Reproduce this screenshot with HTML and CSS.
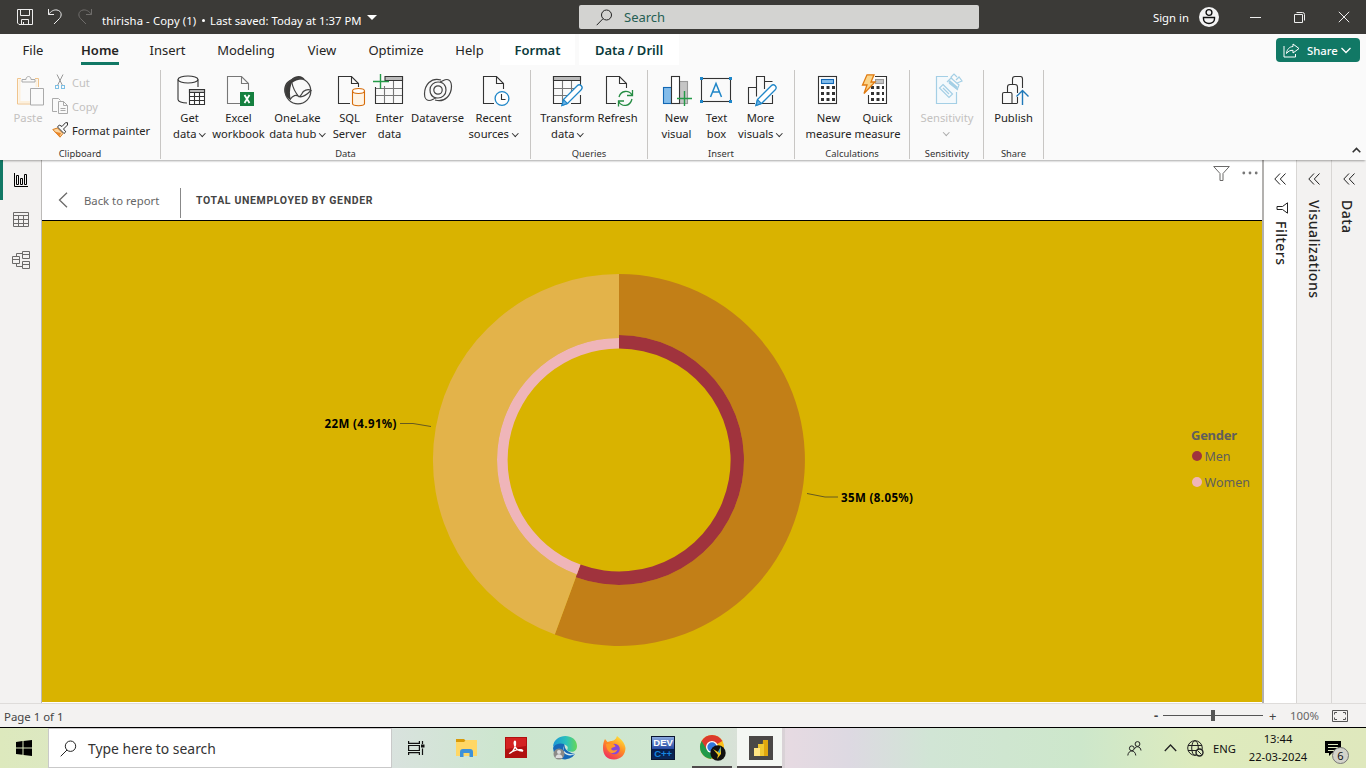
FILE: index.html
```
<!DOCTYPE html>
<html lang="en">
<head>
<meta charset="utf-8">
<title>thirisha - Copy (1)</title>
<link rel="stylesheet" href="styles.css">
</head>
<body>
<div class="app">
<header class="titlebar">
  <div class="quick">
    <svg width="16" height="16" viewBox="0 0 16 16" class="ln light"><path d="M.5.5h15v15H2L.5 14zM3.500.5v6h9v-6M4.500 15.500v-5h7v5M6.500 13v2.500"/></svg>
    <svg width="16" height="17" viewBox="0 0 16 17" class="ln light undo"><path d="M1.500 1v5.500H7M1.500 6.500C4 3 7 1.500 10 2c5 1 5 6 2.500 8.500L7 16"/></svg>
    <svg width="16" height="17" viewBox="0 0 16 17" class="ln dim redo"><path d="M14.500 1v5.500H9M14.500 6.500C12 3 9 1.500 6 2c-5 1-5 6-2.500 8.500L9 16"/></svg>
  </div>
  <div class="doc"><span class="doc-name">thirisha - Copy (1)</span><i class="dot"></i><span class="doc-saved">Last saved: Today at 1:37 PM</span><i class="caret"></i></div>
  <div class="search"><svg width="17" height="17" viewBox="0 0 17 17" class="ln"><circle cx="10.500" cy="6" r="5"/><path d="M7 9.700L.7 16.200"/></svg><span>Search</span></div>
  <div class="account"><span>Sign in</span>
    <svg width="20" height="20" viewBox="0 0 20 20"><circle cx="10" cy="10" r="10" fill="#f3f3f3"/><g fill="none" stroke="#111" stroke-width="1.400"><circle cx="10" cy="5.500" r="2.900"/><path d="M4.500 10.500h11v1.500a5.500 4.500 0 0 1-11 0z"/></g></svg>
  </div>
  <svg class="ln light win-min" width="11" height="12" viewBox="0 0 11 12"><path d="M0 6.500h11"/></svg>
  <svg class="ln light win-max" width="11" height="11" viewBox="0 0 11 11"><path d="M.5 2.500h8v8h-8zM2.500.5h6q2 0 2 2v6"/></svg>
  <svg class="ln light win-close" width="12" height="12" viewBox="0 0 12 12"><path d="M.8.8l10.400 10.400M11.200.8L.8 11.200"/></svg>
</header>

<nav class="tabs">
  <span class="tab t-file">File</span><span class="tab t-home on">Home</span><span class="tab t-insert">Insert</span><span class="tab t-model">Modeling</span><span class="tab t-view">View</span><span class="tab t-opt">Optimize</span><span class="tab t-help">Help</span><span class="tab ctx t-format">Format</span><span class="tab ctx t-drill">Data / Drill</span>
  <div class="share"><svg width="17" height="15" viewBox="0 0 17 15" class="ln"><path d="M1 3v11h11.500v-3M10 1l6 4.500L10 10V7.300C7 7.300 5.500 8 3.500 10.500 4 6 6.500 3.800 10 3.500z"/></svg><span>Share</span><svg width="10" height="7" viewBox="0 0 10 7" class="ln"><path d="M.5 1L5 5.500 9.500 1" stroke-width="1.300"/></svg></div>
</nav>

<section class="ribbon">
  <div class="group g-clip">
    <div class="clip">
      <div class="paste"><svg width="32" height="32" viewBox="0 0 32 32" fill="none" stroke="#aaa"><path d="M5 3.500H1.500V29H15M19 3.500h3.500V12" stroke="#f0c48c"/><path d="M5 5.500H3.500V27H15M19 5.500h1.500V12" stroke="#fdf0dc" stroke-width="2"/><path d="M6 7V4.500h4C10 .5 15 .5 15 4.500h4V7zM14.500 13.500h13v16.500h-13z" fill="#fafafa"/></svg><span>Paste</span></div>
      <div class="clip-list">
        <div class="mini off"><svg width="16" height="16" viewBox="0 0 16 16" fill="none" stroke="#999"><path d="M5 .5l5.500 11M11 .5l-5.500 11"/><g stroke="#7fc0e4"><rect x="3.500" y="11.500" width="3" height="3"/><rect x="9.500" y="11.500" width="3" height="3"/></g></svg><span>Cut</span></div>
        <div class="mini off"><svg width="16" height="16" viewBox="0 0 16 16" fill="none" stroke="#aaa"><path d="M5 13.500H.5V.5h6l2 2M6.500 3.500h5l4 4v8h-9zM11.500 3.500v4h4M8.500 10.500h5M8.500 12.500h5"/></svg><span>Copy</span></div>
        <div class="mini"><svg width="16" height="16" viewBox="0 0 16 16"><path d="M.8 7.500L5.500 6l5.500 5.500L8 15.200z" fill="#fbd5a0" stroke="#d97a1a"/><path d="M2 9.500l7 1.500-1.500 3.500z" fill="#e8872b"/><path d="M5.500 5l6.500 6.500 1.800-1.700-2.300-2.800L15.500 3V.7H13.500L10 4.500 7.300 3z" fill="#fafafa" stroke="#333"/></svg><span>Format painter</span></div>
      </div>
    </div>
    <div class="gname">Clipboard</div>
  </div>

  <div class="group g-data">
    <div class="btns">
      <div class="btn w48"><svg width="32" height="32" viewBox="0 0 32 32" class="ic shift"><ellipse cx="11" cy="5.500" rx="10" ry="3.500"/><path d="M1 5.500v20c0 2 4 3.500 9 3.500M21 5.500V13"/><path d="M12.500 15.500h15v15h-15z" fill="#fff"/><path d="M12.500 15.500h15v3h-15z" fill="#bbb"/><path d="M17.500 18v12M22.500 18v12M13 22.500h14M13 26.500h14"/></svg><span>Get</span><span>data<b class="chev"></b></span></div>
      <div class="btn w50"><svg width="32" height="32" viewBox="0 0 32 32" class="ic"><path d="M18 29.500H5.500v-27h14l7 7V16M19.500 2.500v7h7" stroke="#777"/><rect x="18" y="18" width="14" height="14" fill="#15803f" stroke="none"/><path d="M22.500 21l5 8M27.500 21l-5 8" stroke="#fff" stroke-width="1.800"/></svg><span>Excel</span><span>workbook</span></div>
      <div class="btn w68"><svg width="32" height="32" viewBox="0 0 32 32"><path d="M10 5.500C16 .5 21 1.500 24 5.500 18 5 14 6 10.500 9.500 8.500 16 8.500 21 10 26 1 22 1 9 10 5.500z" fill="#3b3a39"/><g fill="none" stroke="#444" stroke-width="1.200"><circle cx="17" cy="17" r="12.800"/><path d="M11 9c1 6 3 9 7 14M9 25.500c3-4.500 6-5 9-3 4 1.500 8-2 12-6-3-2-8 0-9 3-1 2-2 3-3 3.500"/></g></svg><span>OneLake</span><span>data hub<b class="chev"></b></span></div>
      <div class="btn w36"><svg width="32" height="32" viewBox="0 0 32 32" class="ic"><path d="M17 29.500H5.500v-27h13l7 7V13M18.500 2.500v7h7"/><path d="M19.500 17v12.500c0 3 12 3 12 0V17" fill="#fff4e5" stroke="#d66b08"/><ellipse cx="25.500" cy="17" rx="6" ry="2.500" fill="#fff" stroke="#d66b08"/></svg><span>SQL</span><span>Server</span></div>
      <div class="btn w44"><svg width="32" height="32" viewBox="0 0 32 32" class="ic"><path d="M2.500 13v16.500h27v-27H13"/><path d="M12 2.500h17.500v4H12z" fill="#bbb"/><path d="M3 14.500h26M3 21.500h26M11.500 12v17M20.500 7v22" stroke="#777"/><path d="M0 7.500h16M7.500 0v15" stroke="#249a48" stroke-width="1.400"/></svg><span>Enter</span><span>data</span></div>
      <div class="btn w52"><svg width="32" height="32" viewBox="0 0 32 32" fill="none" stroke="#444" stroke-width="1.200"><circle cx="17" cy="16" r="4.200"/><path d="M20 6C10 3 3.500 11 3.500 20c0 4 2 6.500 4.500 6.500 3 0 4.500-2 7-2.500M14 26c10 3 16.500-5 16.500-14 0-4-2-6.500-4.500-6.500-3 0-4.500 2-7 2.500"/><path d="M15 24c-4-1-6-4-6-8 0-5 4-8 8-8 3 0 6 1.500 7 4M19 8c4 1 6 4 6 8 0 5-4 8-8 8-3 0-6-1.500-7-4"/></svg><span>Dataverse</span></div>
      <div class="btn w60"><svg width="32" height="32" viewBox="0 0 32 32" class="ic"><path d="M17 29.500H6.500v-27h13l7 7V15M19.500 2.500v7h7"/><circle cx="25" cy="24.500" r="6.900" fill="#fff" stroke="#1f86c8" stroke-width="1.300"/><path d="M24.500 20v5.500h4"/></svg><span>Recent</span><span>sources<b class="chev"></b></span></div>
    </div>
    <div class="gname">Data</div>
  </div>

  <div class="group g-query">
    <div class="btns">
      <div class="btn w60"><svg width="32" height="32" viewBox="0 0 32 32" class="ic"><path d="M12 29.500H2.500v-27h27V12M29.500 21v8.500H20"/><path d="M2.500 2.500h27v4h-27z" fill="#bbb"/><path d="M3 14.500h22M3 21.500h15M11.500 7v22M20.500 7v12" stroke="#777"/><path d="M11 31.500l1.500-6L26 12c3-3 7 1 4 4L16.500 29.500z" fill="#fff" stroke="#1f86c8" stroke-width="1.300"/><path d="M11 31.500l1.500-6 4 4z" fill="#68b1e5" stroke="#1f86c8"/></svg><span>Transform</span><span>data<b class="chev"></b></span></div>
      <div class="btn w40"><svg width="32" height="32" viewBox="0 0 32 32" class="ic"><path d="M15 29.500H5.500v-27h13l7 7V14M18.500 2.500v7h7"/><g stroke="#258c43" stroke-width="1.300"><path d="M18 23c2-7 10-7 13-2M31.500 16v5.500H26M31 25c-2 8-10 8-13 3M17.500 32.500V27H23"/></g></svg><span>Refresh</span></div>
    </div>
    <div class="gname">Queries</div>
  </div>

  <div class="group g-insert">
    <div class="btns">
      <div class="btn w32"><svg width="32" height="32" viewBox="0 0 32 32" class="ic"><rect x="19.500" y="7.500" width="8" height="22" fill="#c5c5c5" stroke="#999"/><rect x="3.500" y="13.500" width="8" height="16" fill="#83bcea" stroke="#1267b4"/><rect x="11.500" y="2.500" width="8" height="27" fill="#fff"/><path d="M17 24.500h15M24.500 17v15" stroke="#249a48" stroke-width="1.400"/></svg><span>New</span><span>visual</span></div>
      <div class="btn w48"><svg width="32" height="32" viewBox="0 0 32 32" class="ic"><rect x="1.500" y="4.500" width="29" height="23"/><path d="M0 3h3v3H0zM29 3h3v3h-3zM0 26h3v3H0zM29 26h3v3h-3z" fill="#1f86c8" stroke="none"/><path d="M10.500 23L16 9.500 21.500 23M12.500 18h7" stroke="#1f86c8" stroke-width="1.500"/></svg><span>Text</span><span>box</span></div>
      <div class="btn w40"><svg width="32" height="32" viewBox="0 0 32 32" class="ic"><path d="M11 29.500H4.500v-16h8v9M12.500 22V2.500h8V15M20.500 7.500h8M28.500 21v8.500H18"/><path d="M12 31.500l1.500-6L27 12c3-3 7 1 4 4L17.500 29.500z" fill="#fff" stroke="#1f86c8" stroke-width="1.300"/><path d="M12 31.500l1.500-6 4 4z" fill="#68b1e5" stroke="#1f86c8"/></svg><span>More</span><span>visuals<b class="chev"></b></span></div>
    </div>
    <div class="gname">Insert</div>
  </div>

  <div class="group g-calc">
    <div class="btns">
      <div class="btn w50"><svg width="32" height="32" viewBox="0 0 32 32" class="ic"><rect x="6.500" y="2.500" width="18" height="27" fill="#fff"/><rect x="9.500" y="5.500" width="12" height="4" fill="#83bcea" stroke="#1267b4"/><path d="M9 13.500h14M9 19.500h14M9 25.500h14" stroke-width="3" stroke-dasharray="3 2.500"/></svg><span>New</span><span>measure</span></div>
      <div class="btn w48"><svg width="32" height="32" viewBox="0 0 32 32" class="ic"><path d="M14 2.500h11.500v27h-18V21" fill="#fff"/><rect x="14.500" y="5.500" width="8" height="4" fill="#c5c5c5" stroke="#999"/><path d="M10 13.500h13M10 19.500h13M10 25.500h13" stroke-width="3" stroke-dasharray="3 2.500"/><path d="M6 .8h7L10 8h4L3 19.500 6 11H1.500z" fill="#fbd58b" stroke="#e07a10" stroke-width="1.300"/></svg><span>Quick</span><span>measure</span></div>
    </div>
    <div class="gname">Calculations</div>
  </div>

  <div class="group g-sens">
    <div class="btns">
      <div class="btn w71 off"><svg width="32" height="32" viewBox="0 0 32 32" fill="none" stroke="#a4cfe5" stroke-width="1.200"><path d="M17 2.500H5.500v27h20V18" fill="#f4f9fc"/><path d="M12 10.500l9.500 9.500-3.500 3.500L8.500 14zM12 14l6 6"/><path d="M18 9l9 7M16 8l4-4 8 7-2 5M22 6l-2-3 3-3 3 3M26 9l5-2-3-4-3 3"/><path d="M18 7l8 7" stroke-width="2.500"/></svg><span>Sensitivity</span><b class="chev solo"></b></div>
    </div>
    <div class="gname">Sensitivity</div>
  </div>

  <div class="group g-share">
    <div class="btns">
      <div class="btn w58"><svg width="32" height="32" viewBox="0 0 32 32" class="ic"><path d="M20 29.500H5.500V20q0-1.500 1.500-1.500h6.500q1.500 0 1.500 1.500v9.500M10.500 18.500V13q0-2.500 2.500-2.500h5q2.500 0 2.500 2.500v6M15.500 10.500V5q0-2.500 2.500-2.500h5.500Q25.500 2.500 25.500 5v9M20.500 23v6.500"/><path d="M25.500 31V17M19.500 22.500l6-6 6 6" stroke="#1f78b8" stroke-width="1.400"/></svg><span>Publish</span></div>
    </div>
    <div class="gname">Share</div>
  </div>
  <svg class="collapse" width="9" height="6" viewBox="0 0 9 6"><path d="M.7 5.300L4.500 1.500l3.800 3.800" fill="none" stroke="#333" stroke-width="1.600"/></svg>
</section>

<main class="work">
  <aside class="rail">
    <div class="rail-item on"><svg width="16" height="16" viewBox="0 0 16 16" class="ln"><path d="M1.500 1v13.500H15M3.500 12.500v-9h2v9zM7.500 12.500v-6h2v6zM11.500 12.500v-10h2v10z"/></svg></div>
    <div class="rail-item"><svg width="16" height="16" viewBox="0 0 16 16" class="ln gray"><path d="M.5.5h15v14H.5zM.5 3.500h15M.5 7.500h15M.5 11.500h15M5.500 3v11.500M10.500 3v11.500"/></svg></div>
    <div class="rail-item"><svg width="18" height="18" viewBox="0 0 18 18" class="ln gray"><path d="M.5 5.500h7v7h-7zM.5 8.500h7M10.500.5h7v7h-7zM10.500 3.500h7M10.500 10.500h7v7h-7zM10.500 13.500h7M4.500 5.500v-3h6M4.500 12.500v3h6"/></svg></div>
  </aside>
  <section class="canvas">
    <div class="focus-head">
      <svg width="10" height="16" viewBox="0 0 10 16" class="ln gray back"><path d="M9 .7L1.500 8 9 15.300" stroke-width="1.300"/></svg>
      <span class="back-text">Back to report</span><i class="rule"></i><h1>TOTAL UNEMPLOYED BY GENDER</h1>
      <div class="tools"><svg width="17" height="15" viewBox="0 0 17 15" class="ln gray"><path d="M.7.5h15.600l-6.300 7v7H7v-7z"/></svg><svg width="16" height="4" viewBox="0 0 16 4" fill="#777"><circle cx="1.800" cy="2" r="1.400"/><circle cx="8" cy="2" r="1.400"/><circle cx="14.200" cy="2" r="1.400"/></svg></div>
    </div>
    <svg class="chart" width="1220" height="481" viewBox="42 221 1220 481">
      <path d="M619 274A186 186 0 1 1 554.800 634.600L575.800 577.300A125 125 0 1 0 619 335z" fill="#c27f17"/>
      <path d="M554.800 634.600A186 186 0 0 1 619 274V338A122 122 0 0 0 576.900 574.500z" fill="#e3b34a"/>
      <path d="M619 335A125 125 0 1 1 575.800 577.300L580.500 564.600A111.500 111.500 0 1 0 619 348.500z" fill="#a0333d"/>
      <path d="M576.900 574.500A122 122 0 0 1 619 338V348.500A111.500 111.500 0 0 0 580.500 564.600z" fill="#efb5b9"/>
      <path d="M400 423.500h13l18 3M807 493.500l18 3.500h13" class="leader"/>
      <text x="324.500" y="428" textLength="72" class="val">22M (4.91%)</text>
      <text x="841" y="502" textLength="72" class="val">35M (8.05%)</text>
      <text x="1191" y="440" textLength="46" class="leg-title">Gender</text>
      <circle cx="1197" cy="456" r="5" fill="#a0333d"/><text x="1204.500" y="461" textLength="26" class="leg">Men</text>
      <circle cx="1197" cy="482" r="5" fill="#efb5b9"/><text x="1204.500" y="487" textLength="45.500" class="leg">Women</text>
    </svg>
  </section>
  <aside class="pane filters"><svg width="12" height="12" viewBox="0 0 12 12" class="ln dbl"><path d="M6 .5L.8 6 6 11.500M11.500.5L6.300 6l5.200 5.500"/></svg><svg width="13" height="12" viewBox="0 0 13 12" class="ln fun"><path d="M11.500.8v10.400L6.500 7.500H1v-3h5.500z"/></svg><span>Filters</span></aside>
  <aside class="pane side"><svg width="12" height="12" viewBox="0 0 12 12" class="ln dbl"><path d="M6 .5L.8 6 6 11.500M11.500.5L6.300 6l5.200 5.500"/></svg><span>Visualizations</span></aside>
  <aside class="pane side"><svg width="12" height="12" viewBox="0 0 12 12" class="ln dbl"><path d="M6 .5L.8 6 6 11.500M11.500.5L6.300 6l5.200 5.500"/></svg><span class="p-data">Data</span></aside>
</main>

<footer class="status"><span class="page">Page 1 of 1</span>
  <div class="zoom"><b>-</b><i class="track"><i class="thumb"></i></i><b class="plus">+</b><span>100%</span><svg width="16" height="12" viewBox="0 0 16 12" class="ln"><path d="M.5.5h15v11H.5zM2.500 4.500v-2H5M11 2.500h2.500v2M2.500 7.500v2H5M11 9.500h2.500v-2"/></svg></div>
</footer>

<div class="taskbar">
  <div class="start"><svg width="16" height="16" viewBox="0 0 16 16"><path d="M0 2l6.500-.9V7.500H0zM7.500 1L16 0v7.500H7.500zM0 8.500h6.500v6.300L0 14zM7.500 8.500H16V16l-8.500-1z"/></svg></div>
  <div class="tsearch"><svg width="17" height="17" viewBox="0 0 17 17" class="ln"><circle cx="10.500" cy="6.200" r="5.200"/><path d="M7 10L.7 16.300"/></svg><span>Type here to search</span></div>
  <div class="apps">
    <div class="app-i"><svg width="17" height="16" viewBox="0 0 17 16" fill="none" stroke="#111" stroke-width="1.200"><path d="M.6 1v2.400h10.800V1M.6 15v-2.400h10.800V15M.6 5.500h10.800v5H.6zM14.500 1v3M14.500 8.500V15"/><path d="M13 4.500h3.500v3H13z" fill="#111" stroke="none"/></svg></div>
    <div class="app-i"><svg width="22" height="20" viewBox="0 0 22 20"><path d="M0 1h8l2 2v3H0z" fill="#d99a08"/><path d="M0 4h8l2-2h11v16H0z" fill="#ffd765"/><path d="M4 19v-5q0-3 3-3h7q3 0 3 3v5h-3.500v-4h-6v4z" fill="#3d91d9"/></svg></div>
    <div class="app-i adobe"><svg width="22" height="21" viewBox="0 0 22 21"><rect width="22" height="21" fill="#b01010"/><path d="M1 1h20v8L1 12z" fill="#d42222"/><path d="M5 16c4-1 6-8 5.500-11-.5-2-2 0-1 3 1 4 4 6 8 6 1-1-3-2-6-1s-6 2-6.500 3z" fill="none" stroke="#fff" stroke-width="1.300"/></svg></div>
    <div class="app-i"><svg width="24" height="24" viewBox="0 0 24 24"><defs><linearGradient id="edge-top"><stop stop-color="#1a95d6"/><stop offset=".55" stop-color="#2bc0bb"/><stop offset="1" stop-color="#66d758"/></linearGradient></defs><path d="M0 12A12 12 0 0 1 12 4c-2 8 1 12 10 14A12 12 0 0 1 0 12z" fill="#1668b8"/><path d="M0 11C1-4 24-3 24 10c0 5-4 7-9 5-2-1 1-3-1-5C10 6 3 7 0 11z" fill="url(#edge-top)"/><path d="M11 10c-2 5 2 9 11 8-3 2-8 2-11-1z" fill="#d9edf0"/><circle cx="6" cy="18" r="5.500" fill="#8c8a88"/><circle cx="6" cy="16" r="2" fill="#ddd"/><path d="M2.500 22c0-5 7-5 7 0z" fill="#ddd"/></svg></div>
    <div class="app-i"><svg width="24" height="24" viewBox="0 0 24 24"><defs><linearGradient id="fox" x1=".8" y1="0" x2=".2" y2="1"><stop stop-color="#ffe83c"/><stop offset=".45" stop-color="#ff8d24"/><stop offset="1" stop-color="#f02763"/></linearGradient></defs><path d="M15 0c4 3 8 7 8.500 12 0 6.500-4.500 11.500-11.500 11.500S1 19 1 12c0-4 .5-6 2-9l2.500 3 3.500-1c2 0 5-1 6-5z" fill="url(#fox)"/><circle cx="12.500" cy="13" r="5.300" fill="#8547dc"/><path d="M4 8c4-1 9-1 9.500 2.500l-4 1.500c-1 3 3 3 6 1.500-3 6-11 4.500-11.500-5.500z" fill="#ff9828"/></svg></div>
    <div class="app-i"><div class="dev"><span>DEV</span><span class="cpp">C++</span></div></div>
    <div class="app-i run"><svg width="26" height="26" viewBox="0 0 26 26"><circle cx="12" cy="12" r="12" fill="#fbc11b"/><path d="M12 12L1.600 6A12 12 0 0 1 22.400 6z" fill="#db3a2d"/><path d="M1.600 6A12 12 0 0 0 11 24l6-9-5-3z" fill="#219a4a"/><path d="M1.600 6L7 15l5-9z" fill="#db3a2d"/><circle cx="12" cy="12" r="6" fill="#fff"/><circle cx="12" cy="12" r="4.700" fill="#3277dd"/><circle cx="18" cy="18" r="7.700" fill="#111"/><path d="M13 14l5 3 3-5 0 7-4 5 1-4z" fill="#e8c11e"/><path d="M18 17l3-6-1 7z" fill="#299cd0"/></svg></div>
    <div class="app-i active"><svg width="24" height="24" viewBox="0 0 24 24"><rect width="24" height="24" fill="#4a4846"/><path d="M14 4h5v16h-6z" fill="#e0a70e"/><path d="M9 8h6v12H9z" fill="#f1c933"/><path d="M5 12h6v8H5z" fill="#ffe483"/></svg></div>
  </div>
  <div class="tray">
    <svg class="ln people" width="15" height="15" viewBox="0 0 15 15"><circle cx="10.500" cy="3" r="2.400"/><path d="M7.500 8c1-3.500 6-3 6.500 1.500"/><circle cx="4.800" cy="7.300" r="2.400"/><path d="M.8 14.500c.5-6 7.500-6 8 0"/></svg>
    <svg class="ln up" width="13" height="8" viewBox="0 0 13 8"><path d="M.8 7l5.700-6 5.700 6" stroke-width="1.300"/></svg>
    <svg class="ln globe" width="17" height="17" viewBox="0 0 17 17"><circle cx="8" cy="8" r="7.300"/><ellipse cx="8" cy="8" rx="3.300" ry="7.300"/><path d="M1 5.500h14M1 10.500h14"/><circle cx="12.500" cy="12.500" r="3.500" fill="#deebc3" stroke-width="1.400"/><path d="M10.500 10.500l4 4"/></svg>
    <span class="lang">ENG</span>
    <div class="clock"><span>13:44</span><span>22-03-2024</span></div>
    <div class="note"><svg width="16" height="15" viewBox="0 0 16 15"><path d="M0 0h16v12H7l-3 3v-3H0z"/><path d="M3 3.500h10M3 6.500h10M3 9.500h6" stroke="#dfe8bf"/></svg><span class="badge">6</span></div>
  </div>
</div>
</div>
</body>
</html>
```
FILE: styles.css
```
* { box-sizing: border-box; }
body { margin: 0; overflow: hidden; font-family: "Noto Sans", "Open Sans", sans-serif; font-size: 11.3px; color: #252423; }
svg { display: block; flex: none; overflow: visible; }
.ln { fill: none; stroke: #222; }
.light { stroke: #eee; }
.dim { stroke: #6f6d6b; }
.gray { stroke: #6b6a69; }
.app { width: 1366px; height: 768px; display: flex; flex-direction: column; background: #f3f2f1; }

.titlebar { height: 34px; flex: none; background: #3b3a37; color: #fff; display: flex; align-items: center; }
.quick { display: flex; width: 102px; padding-left: 17px; }
.undo { margin-left: 14px; margin-top: -1px; }
.redo { margin-left: 14px; margin-top: -1px; }
.doc { width: 477px; display: flex; align-items: center; padding-top: 6px; white-space: nowrap; }
.doc-name { width: 95px; letter-spacing: .1px; }
.dot { width: 3px; height: 3px; border-radius: 50%; background: #fff; margin: 0 5px 0 5px; }
.doc-saved { width: 151px; }
.caret { margin: -6px 0 0 6px; border: 5px solid transparent; border-top-color: #fff; border-bottom: 0; }
.search { width: 400px; height: 24px; background: #d3d3d1; border-radius: 2px; display: flex; align-items: center; gap: 11px; padding-left: 17px; color: #265f54; font-size: 13px; }
.account { display: flex; align-items: center; gap: 9px; margin-left: 173px; width: 98px; white-space: nowrap; }
.account span { width: 38px; padding-left: 1px; }
.win-max { margin-left: 33px; }
.win-close { margin-left: 33px; }

.tabs { height: 32px; flex: none; background: #fafafa; display: flex; position: relative; font-size: 13px; padding-left: 16px; white-space: nowrap; }
.tab { height: 31px; line-height: 33px; text-align: center; flex: none; }
.tab.on { font-weight: 600; position: relative; }
.tab.on::after { content: ""; position: absolute; left: 15px; right: 15px; bottom: 0; height: 3px; background: #117865; }
.t-file { width: 34px; margin-right: 16px; }
.t-home { width: 68px; }
.t-insert { width: 67px; }
.t-model { width: 90px; }
.t-view { width: 62px; }
.t-opt { width: 86px; }
.t-help { width: 61px; }
.ctx { background: #fff; color: #0b3b3b; font-weight: 600; }
.t-format { width: 75px; margin-right: 4px; }
.t-drill { width: 100px; }
.share { margin: 4px 6px 0 auto; width: 84px; height: 24px; background: #117865; color: #fff; border-radius: 4px; display: flex; align-items: center; padding-left: 7px; font-size: 11.300px; font-weight: 500; }
.share .ln { stroke: #fff; }
.share span { width: 30px; margin: 1px 4px 0 7px; }

.ribbon { height: 94px; flex: none; background: #fafafa; display: flex; position: relative; z-index: 2; box-shadow: 0 2px 2px -1px rgba(0,0,0,.35); padding-top: 4px; padding-bottom: 1px; }
.group { display: flex; flex-direction: column; border-right: 1px solid #c8c6c4; white-space: nowrap; flex: none; }
.g-clip { width: 161px; }
.g-data { width: 370px; padding-left: 4px; }
.g-query { width: 117px; padding-left: 6px; }
.g-insert { width: 147px; padding-left: 12px; }
.g-calc { width: 115px; padding-left: 8px; }
.g-sens { width: 74px; padding-left: 1px; }
.g-share { width: 60px; }
.gname { height: 11px; line-height: 11px; text-align: center; font-size: 9.400px; margin-top: auto; color: #333; }
.g-data .gname { margin-left: -4px; }
.g-query .gname { margin-left: -6px; }
.g-insert .gname { margin-left: -12px; }
.g-calc .gname { margin-left: -8px; }
.btns { display: flex; height: 76px; }
.btn { display: flex; flex-direction: column; align-items: center; padding-top: 4px; flex: none; font-size: 11.200px; }
.btn > span { line-height: 16px; padding-left: 1px; }
.btn svg { margin-bottom: 4px; }
.btn .shift { margin-left: 8px; }
.off { color: #c3c1bf; }
.w32 { width: 32px; } .w36 { width: 36px; } .w40 { width: 40px; } .w44 { width: 44px; } .w48 { width: 48px; }
.w50 { width: 50px; } .w52 { width: 52px; } .w58 { width: 58px; } .w60 { width: 60px; } .w68 { width: 68px; } .w71 { width: 71px; }
.ic { fill: none; stroke: #333; stroke-width: 1.100; }
.chev { display: inline-block; width: 4.500px; height: 4.500px; border: solid #333; border-width: 0 1.500px 1.500px 0; transform: rotate(45deg); margin: 0 1px 3px 4px; }
.solo { border-color: #aaa; margin: 4px 0 0; }
.clip { display: flex; padding: 3px 0 0 12px; height: 76px; }
.paste { width: 32px; color: #c3c1bf; text-align: center; margin-right: 8px; font-size: 11.300px; }
.paste svg { margin: 2px 0 3px 4px; }
.paste span { display: block; line-height: 16px; }
.clip-list { display: flex; flex-direction: column; font-size: 11.100px; margin-top: -3px; }
.mini { height: 24px; flex: none; display: flex; align-items: center; gap: 4px; }
.collapse { position: absolute; right: 5px; bottom: 7px; }

.work { height: 543px; flex: none; display: flex; }
.rail { width: 42px; border-right: 1px solid #bcbab8; }
.rail-item { height: 40px; display: flex; align-items: center; padding-left: 13px; }
.rail-item:last-child { padding-left: 12px; }
.rail-item.on { border-left: 3px solid #117865; padding-left: 10px; }
.rail-item.on .ln { stroke: #000; }
.canvas { width: 1222px; border-right: 2px solid #b3b1af; background: #fff; }
.focus-head { height: 61px; border-bottom: 1px solid #000; display: flex; padding: 0 4px 0 16px; }
.back { margin-top: 32px; }
.back-text { margin: 32px 0 0 16px; width: 96px; font-size: 11.300px; line-height: 17px; color: #666; }
.rule { width: 1px; height: 30px; margin-top: 28px; background: #888; }
h1 { margin: 32px 0 0 15px; font: 700 10.500px/17px Roboto, sans-serif; letter-spacing: .64px; color: #444; }
.tools { display: flex; gap: 12px; margin-left: auto; padding-top: 6px; }
.tools svg:last-child { margin-top: 5px; }
.chart { background: #d9b300; }
.leader { fill: none; stroke: #665a20; }
.val { font-size: 11.500px; font-weight: 700; fill: #000; }
.leg-title { font-size: 13px; font-weight: 700; fill: #605e5c; }
.leg { font-size: 12.500px; fill: #605e5c; }
.pane { display: flex; flex-direction: column; align-items: center; padding-top: 13px; font-size: 14px; letter-spacing: .5px; }
.pane span { writing-mode: vertical-rl; line-height: 18px; font-weight: 500; margin: 15px 1px 0 0; }
.filters { width: 32px; background: #fff; }
.fun { margin: 17px 0 0 4px; }
.pane.filters span { margin: 7px 0 0 1px; }
.side { width: 35px; border-left: 1px solid #d8d6d4; }
.side .p-data { margin-right: 4px; }

.status { height: 25px; flex: none; border-top: 1px solid #dedcda; border-bottom: 1px solid #000; display: flex; align-items: center; padding: 2px 18px 0 4px; justify-content: space-between; color: #444; font-size: 11.400px; }
.zoom { display: flex; align-items: center; color: #666; }
.zoom b { font-size: 13px; color: #444; width: 9px; line-height: 14px; margin-top: -3px; }
.track { width: 100px; height: 1px; background: #555; position: relative; margin-top: -2px; }
.thumb { position: absolute; left: 48px; top: -5px; width: 4px; height: 11px; background: #555; }
.zoom .plus { width: 9px; margin: -2px 12px 0 6px; font-weight: 400; }
.zoom span { width: 29px; margin: -2px 13px 0 0; }
.zoom .ln { stroke: #555; margin-top: -2px; }

.taskbar { height: 40px; flex: none; display: flex; background: linear-gradient(90deg, #dde9bd 0, #d9e2de 390px, #cde6cf 500px, #cfe6d0 700px, #e6dae2 790px, #ddd9e2 850px, #d1e5d5 930px, #cde7cb 1080px, #deebbd 1200px, #dfe8bd 1366px); }
.start { width: 48px; padding: 12px 0 0 16px; }
.tsearch { width: 344px; height: 40px; background: #fff; border: 1px solid #c9c9c9; display: flex; align-items: center; gap: 11px; padding-left: 11px; font-size: 13.900px; color: #333; }
.apps { display: flex; }
.app-i { width: 49.300px; display: flex; align-items: center; justify-content: center; }
.app-i:nth-child(2) { padding-left: 2px; }
.app-i.adobe { padding: 0 0 2px 2px; }
.app-i.run { box-shadow: inset 0 -2px #504b4c; width: 40px; margin: 0 5px 0 4px; padding-left: 2px; }
.app-i.active { width: 45px; background: #f4f7f3; box-shadow: inset 0 -2px #504b4c, 3px 0 #d9d2d6; padding-left: 3px; }
.dev { width: 24px; height: 24px; border: 1px solid #0a1530; background: linear-gradient(#8aa9e0, #2448a0 55%, #061d4a 56%, #0b2858); color: #fff; font-family: "Liberation Sans", sans-serif; font-size: 9.500px; font-weight: 700; display: flex; flex-direction: column; justify-content: space-between; align-items: center; }
.dev span { line-height: 11px; }
.dev .cpp { color: #1687e0; }
.tray { margin-left: auto; display: flex; align-items: center; width: 239px; font-size: 11.600px; color: #111; }
.up { margin-left: 22px; }
.globe { margin-left: 10px; }
.lang { margin-left: 9px; width: 25px; font-size: 11.200px; }
.clock { width: 62px; margin-left: 9px; text-align: center; line-height: 18px; font-size: 11.200px; white-space: nowrap; }
.clock span { display: block; }
.note { margin-left: 16px; position: relative; }
.badge { position: absolute; left: 7px; top: 6px; width: 17px; height: 17px; border: 1px solid #777; border-radius: 50%; background: #d3d3ca; text-align: center; font-size: 11px; line-height: 15px; }
```
